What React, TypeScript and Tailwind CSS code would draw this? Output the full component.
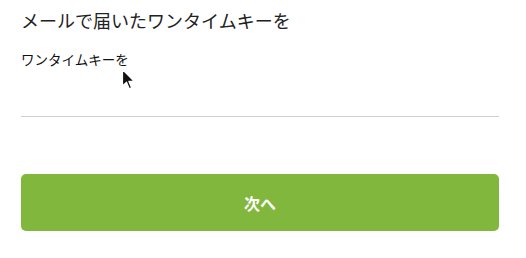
import React from "react";

const Cursor = () => (
  <svg
    className="absolute left-[121px] top-[68px]"
    width="16"
    height="24"
    viewBox="0 0 16 24">
    <path
      d="M1.5 1.5 L1.5 18 L5.5 14.2 L8.3 20.8 L10.6 19.8 L7.9 13.4 L13.2 13.4 Z"
      fill="#111"
      stroke="#fff"
      strokeWidth="1.2"
      strokeLinejoin="round"
    />
  </svg>
);

export default function App() {
  return (
    <div
      className="relative w-[526px] h-[258px] bg-white pl-[21px] pr-[27px] pt-[7px]"
      style={{ fontFamily: '"Noto Sans CJK JP", "Noto Sans", sans-serif' }}>
      <h1 className="text-[18px] leading-[27px] text-[#222]">
        メールで届いたワンタイムキーを
      </h1>
      <div className="mt-[16px]">
        <label className="block text-[13.5px] leading-[18px] text-[#111]">
          ワンタイムキーを
        </label>
        <div className="h-[49px] border-b border-[#cfcfcf]" />
      </div>
      <button className="mt-[57px] w-full h-[57px] rounded-[5px] bg-[#81b73d] text-white text-[16px] font-semibold">
        次へ
      </button>
      <Cursor />
    </div>
  );
}
